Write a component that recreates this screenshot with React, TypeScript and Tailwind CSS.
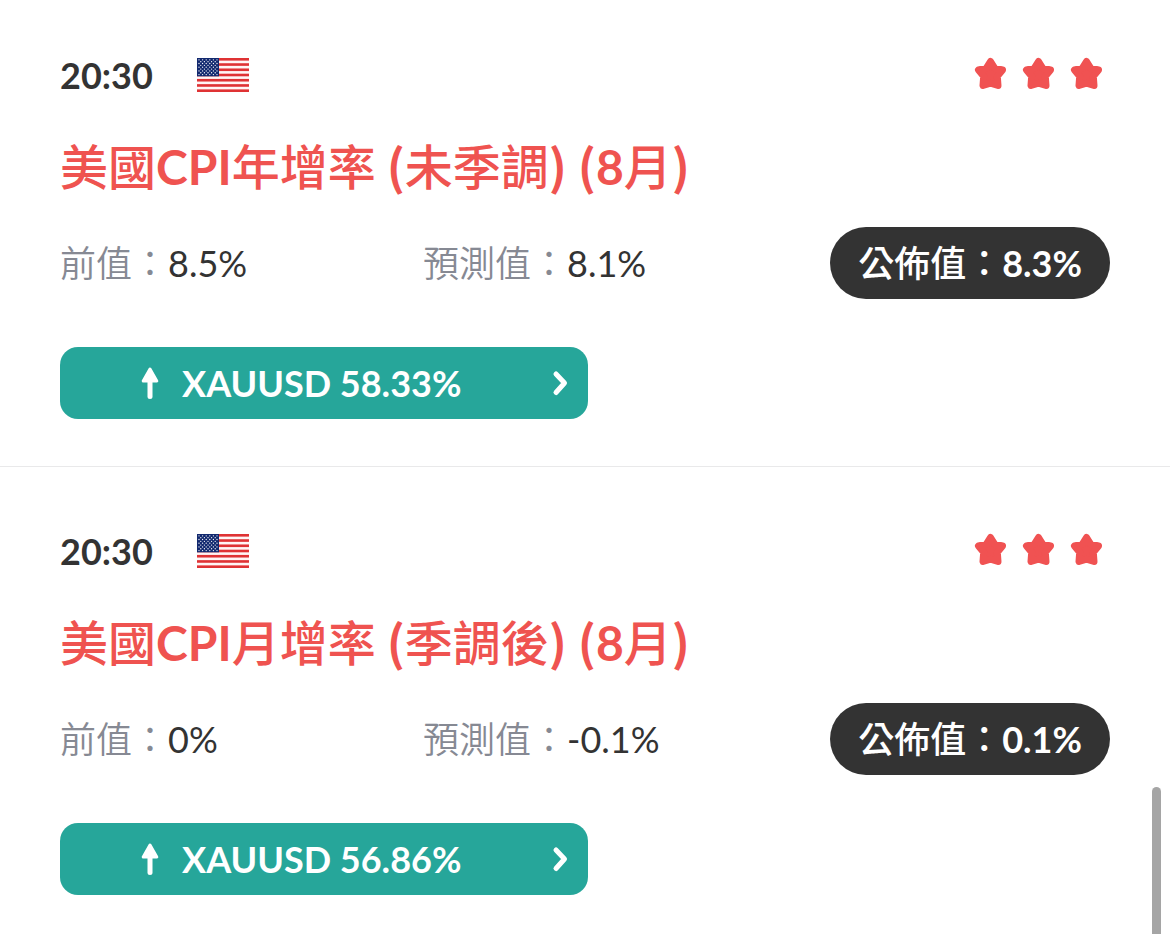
const EVENTS = [
  {
    id: 'cpi-yoy',
    time: '20:30',
    title: '美國CPI年增率 (未季調) (8月)',
    previous: '8.5%',
    forecast: '8.1%',
    actual: '8.3%',
    symbol: 'XAUUSD',
    probability: '58.33%',
    stars: 3,
  },
  {
    id: 'cpi-mom',
    time: '20:30',
    title: '美國CPI月增率 (季調後) (8月)',
    previous: '0%',
    forecast: '-0.1%',
    actual: '0.1%',
    symbol: 'XAUUSD',
    probability: '56.86%',
    stars: 3,
  },
]

type CalendarEvent = (typeof EVENTS)[number]

const STRIPES = [0, 2, 4, 6, 8, 10, 12]
const STAR_ROWS = [0, 1, 2, 3, 4, 5, 6, 7, 8]

function UsFlag() {
  return (
    <svg viewBox="0 0 52 34" className="h-[34px] w-[52px]" role="img" aria-label="美國">
      <rect width="52" height="34" fill="#fff5f5" />
      {STRIPES.map(i => (
        <rect key={i} y={(i * 34) / 13} width="52" height={34 / 13} fill="#df3234" />
      ))}
      <rect width="22" height={(34 * 7) / 13} fill="#12296f" />
      {STAR_ROWS.map(row =>
        Array.from({ length: row % 2 ? 5 : 6 }, (_, col) => (
          <circle
            key={`${row}-${col}`}
            cx={2 + col * 3.6 + (row % 2 ? 1.8 : 0)}
            cy={1.8 + row * 1.85}
            r="0.65"
            fill="#fff"
          />
        )),
      )}
    </svg>
  )
}

function Star() {
  return (
    <svg viewBox="0 0 48 48" className="size-12" aria-hidden="true">
      <path
        d="M24.5 10.5L28.6 17.2L36.5 19L31.3 25.2L32 34.5L24.5 32.2L17 34.5L17.7 25.2L12.5 19L20.4 17.2Z"
        fill="#f05252"
        stroke="#f05252"
        strokeWidth="7"
        strokeLinejoin="round"
      />
    </svg>
  )
}

function ArrowUp() {
  return (
    <svg viewBox="0 0 20 36" className="h-9 w-5" aria-hidden="true">
      <path d="M10 4L16.8 16H3.2Z" fill="#fff" stroke="#fff" strokeWidth="3" strokeLinejoin="round" />
      <path d="M10 15V31.5" stroke="#fff" strokeWidth="5" strokeLinecap="round" />
    </svg>
  )
}

function ChevronRight() {
  return (
    <svg viewBox="0 0 20 36" className="h-9 w-5" aria-hidden="true">
      <path
        d="M6 9L14.5 18L6 27.5"
        fill="none"
        stroke="#fff"
        strokeWidth="5"
        strokeLinecap="round"
        strokeLinejoin="round"
      />
    </svg>
  )
}

// Latin runs keep the heading's bold Lato, Chinese is medium, brackets are bold in the CJK face
function MixedTitle({ text }: { text: string }) {
  return (
    <>
      {text.split(/([A-Za-z0-9]+|[() ]+)/).map((part, i) => {
        if (/^[A-Za-z0-9]/.test(part)) return part
        const bracket = i % 2 === 1
        return (
          <span
            key={i}
            className={`font-['Noto_Sans_CJK_TC',sans-serif] leading-none ${bracket ? 'font-bold' : 'font-medium'}`}
          >
            {part}
          </span>
        )
      })}
    </>
  )
}

function EventItem({ event }: { event: CalendarEvent }) {
  return (
    <li className="border-b border-[#e9e9ea] px-[60px] pt-[60px] pb-[47px] first:pt-[51px] last:border-b-0 last:pb-8">
      {/* Time, country, importance */}
      <div className="flex h-12 items-center">
        <time className="w-[137px] text-[36px] leading-[48px] font-bold text-[#333333]">{event.time}</time>
        <UsFlag />
        <div className="ml-auto flex" role="img" aria-label={`${event.stars}`}>
          {Array.from({ length: event.stars }, (_, i) => (
            <Star key={i} />
          ))}
        </div>
      </div>

      <h2 className="mt-8 text-[48px] leading-[72px] font-bold text-[#ef5350]">
        <MixedTitle text={event.title} />
      </h2>

      {/* Figures */}
      <div className="mt-6 grid grid-cols-[363px_1fr_auto] items-center text-[36px] leading-[72px] text-[#333333]">
        <p>
          <span className="font-[350] text-[#868993]">前值：</span>
          {event.previous}
        </p>
        <p>
          <span className="font-[350] text-[#868993]">預測值：</span>
          {event.forecast}
        </p>
        <p className="rounded-full bg-[#333333] px-7 font-bold text-white">
          <span className="font-medium">公佈值：</span>
          {event.actual}
        </p>
      </div>

      <button
        type="button"
        className="mt-12 flex h-[72px] w-[528px] max-w-full items-center rounded-[18px] bg-[#26a69a] pr-[18px] pl-20 text-[36px] leading-[48px] font-bold text-white"
      >
        <ArrowUp />
        <span className="ml-[22px]">
          {event.symbol} {event.probability}
        </span>
        <span className="ml-auto">
          <ChevronRight />
        </span>
      </button>
    </li>
  )
}

export default function App() {
  return (
    <main className="bg-white font-['Lato','Noto_Sans_CJK_TC',sans-serif]" lang="zh-Hant">
      <ul>
        {EVENTS.map(event => (
          <EventItem key={event.id} event={event} />
        ))}
      </ul>
      {/* Scroll indicator */}
      <div className="fixed right-[9px] bottom-0 h-[147px] w-[9px] rounded-t-full bg-[#a5a5a5]" />
    </main>
  )
}
